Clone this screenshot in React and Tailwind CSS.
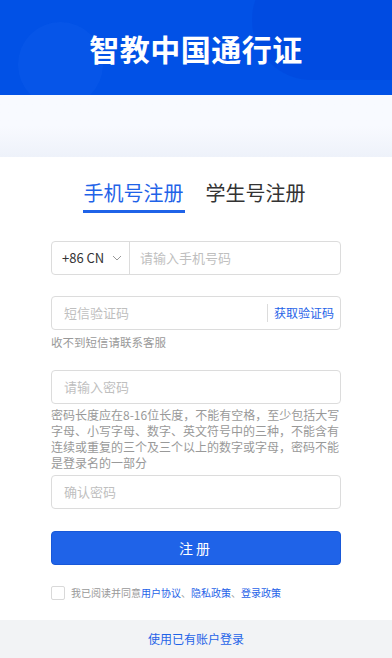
export default function App() {
  return (
    <div
      className="min-h-[658px] w-full bg-white flex flex-col"
      style={{ fontFamily: '"Noto Sans CJK SC", "Noto Sans", sans-serif' }}
    >
      {/* header */}
      <div className="relative h-[95px] bg-[#0151e6] overflow-hidden flex items-center justify-center">
        <div className="absolute left-[18px] top-[22px] w-[85px] h-[85px] rounded-full bg-[#0a58ea]/60" />
        <div className="absolute right-[-60px] top-[-40px] w-[200px] h-[120px] rounded-full bg-[#0048dd]/60" />
        <h1 className="relative text-white text-[30px] font-bold tracking-[0.5px] leading-none">
          智教中国通行证
        </h1>
      </div>
      <div className="h-[62px] bg-gradient-to-b from-[#f8faff] via-[#f8faff] to-[#eef2fa]" />

      {/* form */}
      <div className="flex-1 px-[51px] pt-[22px]">
        <div className="flex justify-center gap-[21px] pr-[4px]">
          <div className="flex flex-col items-center">
            <span className="text-[20px] leading-[28px] text-[#1f63e8]">手机号注册</span>
            <div className="mt-[3px] h-[3px] w-[102px] bg-[#1f63e8]" />
          </div>
          <span className="text-[20px] leading-[28px] text-[#333]">学生号注册</span>
        </div>

        <div className="mt-[28px] h-[34px] flex border border-[#dcdcdc] rounded-[4px] text-[13px]">
          <div className="w-[78px] flex items-center pl-[10px] text-[#333] border-r border-[#dcdcdc]">
            <span>+86 CN</span>
            <svg className="ml-[8px]" width="10" height="6" viewBox="0 0 10 6" fill="none">
              <path d="M1 1l4 4 4-4" stroke="#999" strokeWidth="1" />
            </svg>
          </div>
          <div className="flex-1 flex items-center pl-[10px] text-[#bfbfbf]">请输入手机号码</div>
        </div>

        <div className="mt-[21px] h-[34px] flex items-center border border-[#dcdcdc] rounded-[4px] text-[13px]">
          <div className="flex-1 pl-[12px] text-[#bfbfbf]">短信验证码</div>
          <div className="h-[18px] border-l border-[#dcdcdc] pl-[6px] pr-[6px] flex items-center text-[#1f63e8] text-[12px]">
            获取验证码
          </div>
        </div>
        <p className="mt-[4px] text-[11.5px] leading-[16px] text-[#999]">收不到短信请联系客服</p>

        <div className="mt-[20px] h-[34px] flex items-center border border-[#dcdcdc] rounded-[4px] text-[13px] pl-[12px] text-[#bfbfbf]">
          请输入密码
        </div>
        <p className="mt-[3px] text-[12px] leading-[16px] text-[#999]">
          密码长度应在8-16位长度，不能有空格，至少包括大写字母、小写字母、数字、英文符号中的三种，不能含有连续或重复的三个及三个以上的数字或字母，密码不能是登录名的一部分
        </p>
        <div className="mt-[4px] h-[34px] flex items-center border border-[#dcdcdc] rounded-[4px] text-[13px] pl-[12px] text-[#bfbfbf]">
          确认密码
        </div>

        <button className="mt-[22px] w-full h-[34px] rounded-[4px] bg-[#1f63e8] border border-[#1858d8] text-white text-[14px] tracking-[3px]">
          注册
        </button>

        <div className="mt-[21px] flex items-center text-[10px] leading-[14px]">
          <span className="w-[14px] h-[14px] border border-[#d9d9d9] rounded-[2px] bg-white" />
          <span className="ml-[6px] text-[#999]">我已阅读并同意</span>
          <span className="text-[#1f63e8]">用户协议</span>
          <span className="text-[#999]">、</span>
          <span className="text-[#1f63e8]">隐私政策</span>
          <span className="text-[#999]">、</span>
          <span className="text-[#1f63e8]">登录政策</span>
        </div>
      </div>

      <div className="mt-[20px] h-[38px] bg-[#f2f3f5] flex items-center justify-center text-[12px] text-[#1f63e8]">
        使用已有账户登录
      </div>
    </div>
  );
}
